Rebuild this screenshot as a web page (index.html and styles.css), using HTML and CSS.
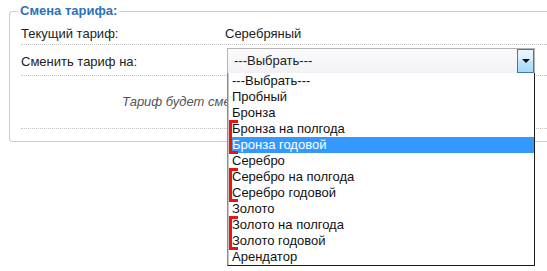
FILE: index.html
```html
<!DOCTYPE html>
<html lang="ru">
<head>
<meta charset="utf-8">
<title>Смена тарифа</title>
<link rel="stylesheet" href="styles.css">
</head>
<body>
<div class="wrap">
  <section class="panel">
    <div class="panel-head">
      <span class="corner"></span>
      <h2 class="panel-title">Смена тарифа:</h2>
      <span class="line"></span>
    </div>
    <div class="panel-body">
      <div class="row">
        <div class="label">Текущий тариф:</div>
        <div class="value">Серебряный</div>
      </div>
      <div class="row row-select">
        <div class="label">Сменить тариф на:</div>
        <div class="value">
          <div class="select">
            <div class="select-text">---Выбрать---</div>
            <div class="select-btn"><span class="arrow"></span></div>
            <div class="dropdown">
              <div class="opt">---Выбрать---</div>
              <div class="opt">Пробный</div>
              <div class="opt">Бронза</div>
              <div class="group">
                <div class="opt">Бронза на полгода</div>
                <div class="opt selected">Бронза годовой</div>
              </div>
              <div class="opt">Серебро</div>
              <div class="group">
                <div class="opt">Серебро на полгода</div>
                <div class="opt">Серебро годовой</div>
              </div>
              <div class="opt">Золото</div>
              <div class="group">
                <div class="opt">Золото на полгода</div>
                <div class="opt">Золото годовой</div>
              </div>
              <div class="opt">Арендатор</div>
            </div>
          </div>
        </div>
      </div>
      <div class="row row-note">
        <div class="note">Тариф будет сменен с нового периода</div>
      </div>
    </div>
  </section>
</div>
</body>
</html>
```
FILE: styles.css
```css
html {
  margin: 0;
  padding: 0;
  background: #fff;
}
body {
  margin: 0;
  padding: 0;
  min-height: 271px;
  font-family: "Liberation Sans", Arial, sans-serif;
  font-size: 13px;
  line-height: 16px;
  color: #222;
  background: #fff;
}
.wrap {
  padding: 3px 0 0 9px;
  width: 538px;
}
.panel-head {
  display: flex;
  height: 16px;
}
.corner {
  align-self: flex-end;
  width: 8px;
  height: 7px;
  border-left: 1px solid #a9d6f0;
  border-top: 1px solid #a9d6f0;
  border-top-left-radius: 4px;
}
.panel-title {
  margin: 0;
  padding: 0 2px;
  font-size: 13px;
  line-height: 16px;
  font-weight: bold;
  color: #2b72b5;
  white-space: nowrap;
}
.line {
  flex: 1;
  align-self: flex-end;
  height: 7px;
  border-top: 1px solid #a9d6f0;
}
.panel-body {
  border: 1px solid #a9d6f0;
  border-top: none;
  border-right: none;
  border-radius: 0 0 0 4px;
  padding: 4px 0 12px 11px;
}
.row {
  display: grid;
  grid-template-columns: 204px 1fr;
  align-items: center;
  border-bottom: 1px dotted #c4c4c4;
}
.row:first-child {
  padding: 2px 0 2px;
}
.row-select {
  padding: 3px 0 0;
}
.row-note {
  display: block;
  padding: 18px 0 18px;
}
.label {
  padding-top: 1px;
}
.note {
  font-style: italic;
  color: #555;
  padding-left: 101px;
  white-space: nowrap;
}
.select {
  position: relative;
  margin-left: 2px;
  width: 308px;
  height: 27px;
  box-sizing: border-box;
  border: 1px solid #b4b4b4;
  border-bottom: 2px solid #a2a2a2;
  background: linear-gradient(#fbfafc, #f3f1f5);
  display: flex;
  align-items: center;
}
.select-text {
  flex: 1;
  padding-left: 6px;
  color: #222;
}
.select-btn {
  align-self: stretch;
  width: 17px;
  box-sizing: border-box;
  border: 1px solid #3c7cb0;
  background: linear-gradient(#eaf6fd 0%, #d9f0fc 45%, #bee6fd 50%, #a7d9f5 100%);
  display: flex;
  align-items: center;
  justify-content: center;
}
.arrow {
  width: 0;
  height: 0;
  border-left: 4px solid transparent;
  border-right: 4px solid transparent;
  border-top: 4px solid #111;
}
.dropdown {
  position: absolute;
  top: 100%;
  left: -1px;
  width: 308px;
  box-sizing: border-box;
  background: #fff;
  border: 1px solid #1a1a1a;
  border-top: none;
  border-left: 1px solid #8c8c8c;
  box-shadow: inset 1px 0 0 #c8c8c8;
  padding-left: 1px;
  z-index: 5;
}
.opt {
  height: 16px;
  line-height: 16px;
  padding-left: 3px;
  color: #111;
  white-space: nowrap;
}
.opt.selected {
  background: #3399ff;
  color: #fff;
}
.group {
  position: relative;
}
.group::before {
  content: "";
  position: absolute;
  left: 0;
  top: -1px;
  bottom: -1px;
  width: 6px;
  border: 3px solid #ee1111;
  border-right: none;
}
```
